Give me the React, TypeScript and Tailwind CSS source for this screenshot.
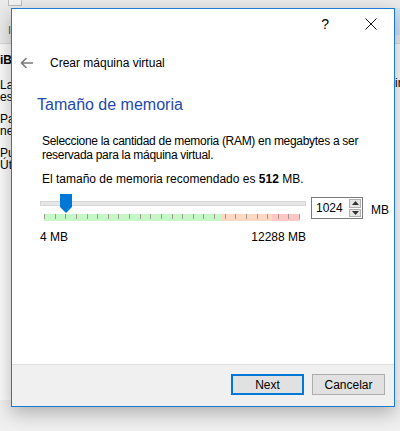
import React from "react";

const font = { fontFamily: '"Liberation Sans", Arial, sans-serif' };

function Ticks() {
  const ticks = Array.from({ length: 25 });
  return (
    <div className="relative ml-[4px] w-[256px] h-[7px] mt-[1px] flex">
      <div className="w-[177px] h-full bg-[#c6f7c6]" />
      <div className="w-[51px] h-full bg-[#ffd8c4]" />
      <div className="flex-1 h-full bg-[#ffc6c6]" />
      <div className="absolute inset-0 flex justify-between">
        {ticks.map((_, i) => (
          <div key={i} className="w-px h-[5px] bg-[#a09a90]" />
        ))}
      </div>
    </div>
  );
}

function Spin() {
  return (
    <div className="flex items-center w-[52px] h-[22px] border border-[#7a7a7a] bg-white">
      <span className="flex-1 pl-[4px] text-[12px] text-black">1024</span>
      <div className="flex flex-col w-[12px] h-[18px] mr-px gap-px">
        <div className="flex-1 bg-[#e6e6e6] border border-[#b0b0b0] flex items-center justify-center">
          <svg width="7" height="4" viewBox="0 0 7 4">
            <path d="M0 4 L3.5 0 L7 4 Z" fill="#333" />
          </svg>
        </div>
        <div className="flex-1 bg-[#e6e6e6] border border-[#b0b0b0] flex items-center justify-center">
          <svg width="7" height="4" viewBox="0 0 7 4">
            <path d="M0 0 L3.5 4 L7 0 Z" fill="#333" />
          </svg>
        </div>
      </div>
    </div>
  );
}

export default function App() {
  return (
    <div className="relative w-[400px] h-[431px] overflow-hidden bg-[#f0f0f0]" style={font}>
      {/* background window behind the dialog */}
      <div className="absolute left-0 top-0 w-[400px] h-[400px] bg-[#fbfbfb]">
        <div className="h-[44px] bg-[#ebebeb] border-b border-[#d9d9d9] relative">
          <div className="absolute left-[8px] top-0 w-[14px] h-[6px] border border-[#bdbdbd] border-t-0 bg-[#f3f3f3]" />
          <span className="absolute left-[8px] top-[24px] text-[11px] leading-[12px] text-[#555]">I</span>
          <div className="absolute right-0 top-[8px] w-[6px] h-[27px] bg-[#cfe3f5]" />
        </div>
        <div className="w-[11px] overflow-hidden pt-[8px] text-[12px] leading-[12px] text-black whitespace-nowrap">
          <div className="font-bold h-[24px] pt-[2px]">iB</div>
          <div className="h-[12px] mt-[3px]">La</div>
          <div className="h-[22px]">esi</div>
          <div className="h-[12px]">Pa</div>
          <div className="h-[22px]">ne</div>
          <div className="h-[12px]">Pu</div>
          <div className="h-[12px]">Úti</div>
        </div>
        <span className="absolute left-[395px] top-[77px] text-[12px] leading-[12px] text-black">ir</span>
      </div>

      {/* dialog */}
      <div className="absolute left-[11px] top-[8px] w-[384px] h-[399px] border border-[#1a7bd0] bg-white flex flex-col shadow-[0_6px_18px_rgba(0,0,0,0.28)]">
        <div className="h-[30px] flex items-center justify-end">
          <span className="text-[14px] text-black mr-[36px]">?</span>
          <svg width="12" height="12" viewBox="0 0 12 12" className="mr-[17px]">
            <path d="M0.5 0.5 L11.5 11.5 M11.5 0.5 L0.5 11.5" stroke="#111" strokeWidth="1" />
          </svg>
        </div>

        <div className="flex items-center h-[46px] pt-[1px]">
          <svg width="14" height="12" viewBox="0 0 14 12" className="ml-[8px]">
            <path d="M13 6 H1.5 M6.5 1 L1.5 6 L6.5 11" stroke="#7a7a7a" strokeWidth="1.6" fill="none" />
          </svg>
          <span className="ml-[16px] text-[12px] text-black">Crear máquina virtual</span>
        </div>

        <div className="pl-[25px] text-[16px] text-[#1f49b0] h-[49px] pt-[8px]">Tamaño de memoria</div>

        <div className="pl-[30px] text-[12px] leading-[14px] text-black whitespace-nowrap">
          <p className="tracking-[-0.3px]">
            Seleccione la cantidad de memoria (RAM) en megabytes a ser
            <br />
            reservada para la máquina virtual.
          </p>
          <p className="mt-[10px]">
            El tamaño de memoria recomendado es <b>512</b> MB.
          </p>
        </div>

        <div className="flex pl-[28px] mt-[8px]">
          <div className="w-[266px] flex flex-col">
            <div className="relative h-[19px] flex items-center">
              <div className="w-[266px] h-[5px] bg-[#e7e7e7] border border-[#d6d6d6]" />
              <svg width="12" height="19" viewBox="0 0 12 19" className="absolute left-[20px] top-0">
                <path d="M0 0 H12 V13 L6 19 L0 13 Z" fill="#0078d7" />
              </svg>
            </div>
            <Ticks />
            <div className="flex justify-between mt-[7px] text-[12px] text-black">
              <span>4 MB</span>
              <span>12288 MB</span>
            </div>
          </div>
          <div className="ml-[5px] mt-[3px] flex items-start">
            <Spin />
            <span className="ml-[8px] mt-[4px] text-[12px] text-black">MB</span>
          </div>
        </div>

        <div className="flex-1" />

        <div className="h-[42px] bg-[#f0f0f0] border-t border-[#dfdfdf] flex items-start justify-end pt-[9px] pr-[9px] gap-[8px]">
          <button className="w-[73px] h-[21px] border-2 border-[#0078d7] bg-[#e1e1e1] text-[12px] text-black leading-none">
            Next
          </button>
          <button className="w-[73px] h-[21px] border border-[#adadad] bg-[#e1e1e1] text-[12px] text-black leading-none">
            Cancelar
          </button>
        </div>
      </div>
    </div>
  );
}
